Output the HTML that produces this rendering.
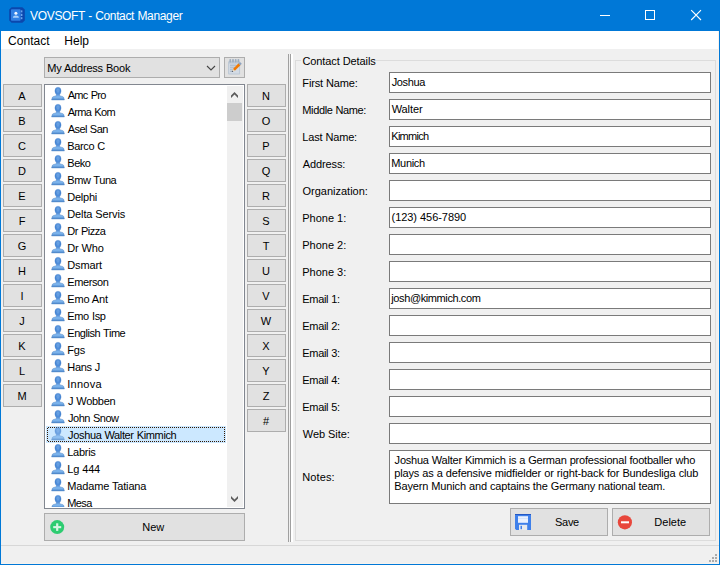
<!DOCTYPE html>
<html><head><meta charset="utf-8"><title>VOVSOFT - Contact Manager</title>
<style>
html,body{margin:0;padding:0}
body{width:720px;height:565px;position:relative;overflow:hidden;background:#f0f0f0;font-family:"Liberation Sans",sans-serif;font-size:11px;color:#000}
div,span,svg{position:absolute;box-sizing:border-box}
.t{white-space:pre;line-height:16px;font-size:11px}
.btn{background:#e1e1e1;border:1px solid #adadad}
.lb{background:#e1e1e1;border:1px solid #adadad;text-align:center;line-height:16px;font-size:11px;padding-top:3px;padding-right:1px}
.inp{background:#fff;border:1px solid #7a7a7a}
</style></head><body>

<div style="left:0px;top:0px;width:720px;height:31px;background:#0078d7"></div>
<div style="left:0px;top:31px;width:720px;height:18px;background:#fff"></div>
<div style="left:0px;top:31px;width:1px;height:534px;background:#0078d7"></div>
<div style="left:719px;top:31px;width:1px;height:534px;background:#0078d7"></div>
<div style="left:0px;top:564px;width:720px;height:1px;background:#0078d7"></div>
<div style="left:718px;top:31px;width:1px;height:533px;background:#f7f3ee"></div>
<div style="left:1px;top:563px;width:718px;height:1px;background:#f7f3ee"></div>
<svg style="left:9px;top:7px" width="16" height="16" viewBox="0 0 16 16">
<path d="M2.6 0.2h10.8l2.4 2.4v10.8l-2.4 2.4H2.6L0.2 13.4V2.6z" fill="#0b47ad"/>
<rect x="2" y="2.2" width="9.6" height="11.6" rx="0.8" fill="#2f80e4"/>
<rect x="11.8" y="3.4" width="1.6" height="2" fill="#6aa6ee"/><rect x="11.8" y="6.8" width="1.6" height="2.2" fill="#6aa6ee"/><rect x="11.8" y="10.2" width="1.6" height="2" fill="#6aa6ee"/>
<circle cx="6.9" cy="6.3" r="1.5" fill="#f4f8ff"/>
<path d="M3.9 10.8c0-1.6 1.3-2.3 3-2.3s3 .7 3 2.3z" fill="#a9d0fb"/>
</svg>
<svg style="left:590px;top:0" width="130" height="31" viewBox="0 0 130 31" shape-rendering="crispEdges">
<rect x="10" y="15" width="10" height="1" fill="#fff"/>
<rect x="55.5" y="10.5" width="9" height="9" fill="none" stroke="#fff" stroke-width="1"/>
<g shape-rendering="geometricPrecision" stroke="#fff" stroke-width="1.1"><path d="M101.2 10.2L111 20M111 10.2L101.2 20" fill="none"/></g>
</svg>
<div class="btn" style="left:44px;top:57px;width:176px;height:21px;"></div>
<svg style="left:206px;top:65px" width="10" height="6" viewBox="0 0 10 6"><path d="M1 1L5 5L9 1" fill="none" stroke="#444" stroke-width="1.1"/></svg>
<div class="btn" style="left:224px;top:57px;width:21px;height:21px;"></div>
<svg style="left:227px;top:59px" width="16" height="16" viewBox="0 0 16 16">
<rect x="1.1" y="2.3" width="12" height="13.2" rx="0.8" fill="#bcc8d5"/>
<rect x="2.1" y="4.6" width="10" height="9.9" fill="#d3dbe5"/>
<g fill="#9dadbf"><rect x="2.4" y="0" width="1.8" height="3.6" rx=".8"/><rect x="5.1" y="0" width="1.8" height="3.6" rx=".8"/><rect x="7.8" y="0" width="1.8" height="3.6" rx=".8"/><rect x="10.5" y="0" width="1.8" height="3.6" rx=".8"/></g>
<g fill="#a4b4c6"><rect x="3" y="5.7" width="6.4" height="1"/><rect x="3" y="7.7" width="5" height="1"/><rect x="3" y="9.7" width="3.4" height="1"/><rect x="3" y="11.7" width="2.4" height="1"/></g>
<path d="M6.9 10.9L12.5 5.3" stroke="#f07a05" stroke-width="2.7" stroke-linecap="butt"/>
<path d="M12.4 5.4L13.9 3.9" stroke="#8ea3bf" stroke-width="2.6"/>
<path d="M5 12.8l.9-2.6 1.8 1.8z" fill="#ecdcbc"/><path d="M4.7 13.1l.7-1.5 .9 .9z" fill="#26344f"/>
</svg>
<div class="lb" style="left:3px;top:84px;width:39px;height:23px;">A</div>
<div class="lb" style="left:3px;top:109px;width:39px;height:23px;">B</div>
<div class="lb" style="left:3px;top:134px;width:39px;height:23px;">C</div>
<div class="lb" style="left:3px;top:159px;width:39px;height:23px;">D</div>
<div class="lb" style="left:3px;top:184px;width:39px;height:23px;">E</div>
<div class="lb" style="left:3px;top:209px;width:39px;height:23px;">F</div>
<div class="lb" style="left:3px;top:234px;width:39px;height:23px;">G</div>
<div class="lb" style="left:3px;top:259px;width:39px;height:23px;">H</div>
<div class="lb" style="left:3px;top:284px;width:39px;height:23px;">I</div>
<div class="lb" style="left:3px;top:309px;width:39px;height:23px;">J</div>
<div class="lb" style="left:3px;top:334px;width:39px;height:23px;">K</div>
<div class="lb" style="left:3px;top:359px;width:39px;height:23px;">L</div>
<div class="lb" style="left:3px;top:384px;width:39px;height:23px;">M</div>
<div class="lb" style="left:247px;top:84px;width:39px;height:23px;">N</div>
<div class="lb" style="left:247px;top:109px;width:39px;height:23px;">O</div>
<div class="lb" style="left:247px;top:134px;width:39px;height:23px;">P</div>
<div class="lb" style="left:247px;top:159px;width:39px;height:23px;">Q</div>
<div class="lb" style="left:247px;top:184px;width:39px;height:23px;">R</div>
<div class="lb" style="left:247px;top:209px;width:39px;height:23px;">S</div>
<div class="lb" style="left:247px;top:234px;width:39px;height:23px;">T</div>
<div class="lb" style="left:247px;top:259px;width:39px;height:23px;">U</div>
<div class="lb" style="left:247px;top:284px;width:39px;height:23px;">V</div>
<div class="lb" style="left:247px;top:309px;width:39px;height:23px;">W</div>
<div class="lb" style="left:247px;top:334px;width:39px;height:23px;">X</div>
<div class="lb" style="left:247px;top:359px;width:39px;height:23px;">Y</div>
<div class="lb" style="left:247px;top:384px;width:39px;height:23px;">Z</div>
<div class="lb" style="left:247px;top:409px;width:39px;height:23px;">#</div>
<div style="left:44px;top:84px;width:201px;height:425px;background:#fff;border:1px solid #828790"></div>
<div style="left:227px;top:86px;width:16px;height:421px;background:#f0f0f0"></div>
<div style="left:227px;top:103px;width:15px;height:18px;background:#cdcdcd"></div>
<svg style="left:230px;top:91px" width="9" height="8" viewBox="0 0 9 8"><path d="M1 4.5L4.5 1L8 4.5V7.1L4.5 3.6L1 7.1Z" fill="#5c5c5c"/></svg>
<svg style="left:230px;top:495px" width="9" height="8" viewBox="0 0 9 8"><path d="M1 3.5L4.5 7L8 3.5V0.9L4.5 4.4L1 0.9Z" fill="#5c5c5c"/></svg>
<div style="left:46px;top:426px;width:180px;height:17px;background:#cce8ff"></div>
<svg style="left:47px;top:427px" width="178" height="15" viewBox="0 0 178 15" shape-rendering="crispEdges"><g fill="#331700"><rect x="1" y="0" width="1" height="1"/><rect x="1" y="14" width="1" height="1"/><rect x="3" y="0" width="1" height="1"/><rect x="3" y="14" width="1" height="1"/><rect x="5" y="0" width="1" height="1"/><rect x="5" y="14" width="1" height="1"/><rect x="7" y="0" width="1" height="1"/><rect x="7" y="14" width="1" height="1"/><rect x="9" y="0" width="1" height="1"/><rect x="9" y="14" width="1" height="1"/><rect x="11" y="0" width="1" height="1"/><rect x="11" y="14" width="1" height="1"/><rect x="13" y="0" width="1" height="1"/><rect x="13" y="14" width="1" height="1"/><rect x="15" y="0" width="1" height="1"/><rect x="15" y="14" width="1" height="1"/><rect x="17" y="0" width="1" height="1"/><rect x="17" y="14" width="1" height="1"/><rect x="19" y="0" width="1" height="1"/><rect x="19" y="14" width="1" height="1"/><rect x="21" y="0" width="1" height="1"/><rect x="21" y="14" width="1" height="1"/><rect x="23" y="0" width="1" height="1"/><rect x="23" y="14" width="1" height="1"/><rect x="25" y="0" width="1" height="1"/><rect x="25" y="14" width="1" height="1"/><rect x="27" y="0" width="1" height="1"/><rect x="27" y="14" width="1" height="1"/><rect x="29" y="0" width="1" height="1"/><rect x="29" y="14" width="1" height="1"/><rect x="31" y="0" width="1" height="1"/><rect x="31" y="14" width="1" height="1"/><rect x="33" y="0" width="1" height="1"/><rect x="33" y="14" width="1" height="1"/><rect x="35" y="0" width="1" height="1"/><rect x="35" y="14" width="1" height="1"/><rect x="37" y="0" width="1" height="1"/><rect x="37" y="14" width="1" height="1"/><rect x="39" y="0" width="1" height="1"/><rect x="39" y="14" width="1" height="1"/><rect x="41" y="0" width="1" height="1"/><rect x="41" y="14" width="1" height="1"/><rect x="43" y="0" width="1" height="1"/><rect x="43" y="14" width="1" height="1"/><rect x="45" y="0" width="1" height="1"/><rect x="45" y="14" width="1" height="1"/><rect x="47" y="0" width="1" height="1"/><rect x="47" y="14" width="1" height="1"/><rect x="49" y="0" width="1" height="1"/><rect x="49" y="14" width="1" height="1"/><rect x="51" y="0" width="1" height="1"/><rect x="51" y="14" width="1" height="1"/><rect x="53" y="0" width="1" height="1"/><rect x="53" y="14" width="1" height="1"/><rect x="55" y="0" width="1" height="1"/><rect x="55" y="14" width="1" height="1"/><rect x="57" y="0" width="1" height="1"/><rect x="57" y="14" width="1" height="1"/><rect x="59" y="0" width="1" height="1"/><rect x="59" y="14" width="1" height="1"/><rect x="61" y="0" width="1" height="1"/><rect x="61" y="14" width="1" height="1"/><rect x="63" y="0" width="1" height="1"/><rect x="63" y="14" width="1" height="1"/><rect x="65" y="0" width="1" height="1"/><rect x="65" y="14" width="1" height="1"/><rect x="67" y="0" width="1" height="1"/><rect x="67" y="14" width="1" height="1"/><rect x="69" y="0" width="1" height="1"/><rect x="69" y="14" width="1" height="1"/><rect x="71" y="0" width="1" height="1"/><rect x="71" y="14" width="1" height="1"/><rect x="73" y="0" width="1" height="1"/><rect x="73" y="14" width="1" height="1"/><rect x="75" y="0" width="1" height="1"/><rect x="75" y="14" width="1" height="1"/><rect x="77" y="0" width="1" height="1"/><rect x="77" y="14" width="1" height="1"/><rect x="79" y="0" width="1" height="1"/><rect x="79" y="14" width="1" height="1"/><rect x="81" y="0" width="1" height="1"/><rect x="81" y="14" width="1" height="1"/><rect x="83" y="0" width="1" height="1"/><rect x="83" y="14" width="1" height="1"/><rect x="85" y="0" width="1" height="1"/><rect x="85" y="14" width="1" height="1"/><rect x="87" y="0" width="1" height="1"/><rect x="87" y="14" width="1" height="1"/><rect x="89" y="0" width="1" height="1"/><rect x="89" y="14" width="1" height="1"/><rect x="91" y="0" width="1" height="1"/><rect x="91" y="14" width="1" height="1"/><rect x="93" y="0" width="1" height="1"/><rect x="93" y="14" width="1" height="1"/><rect x="95" y="0" width="1" height="1"/><rect x="95" y="14" width="1" height="1"/><rect x="97" y="0" width="1" height="1"/><rect x="97" y="14" width="1" height="1"/><rect x="99" y="0" width="1" height="1"/><rect x="99" y="14" width="1" height="1"/><rect x="101" y="0" width="1" height="1"/><rect x="101" y="14" width="1" height="1"/><rect x="103" y="0" width="1" height="1"/><rect x="103" y="14" width="1" height="1"/><rect x="105" y="0" width="1" height="1"/><rect x="105" y="14" width="1" height="1"/><rect x="107" y="0" width="1" height="1"/><rect x="107" y="14" width="1" height="1"/><rect x="109" y="0" width="1" height="1"/><rect x="109" y="14" width="1" height="1"/><rect x="111" y="0" width="1" height="1"/><rect x="111" y="14" width="1" height="1"/><rect x="113" y="0" width="1" height="1"/><rect x="113" y="14" width="1" height="1"/><rect x="115" y="0" width="1" height="1"/><rect x="115" y="14" width="1" height="1"/><rect x="117" y="0" width="1" height="1"/><rect x="117" y="14" width="1" height="1"/><rect x="119" y="0" width="1" height="1"/><rect x="119" y="14" width="1" height="1"/><rect x="121" y="0" width="1" height="1"/><rect x="121" y="14" width="1" height="1"/><rect x="123" y="0" width="1" height="1"/><rect x="123" y="14" width="1" height="1"/><rect x="125" y="0" width="1" height="1"/><rect x="125" y="14" width="1" height="1"/><rect x="127" y="0" width="1" height="1"/><rect x="127" y="14" width="1" height="1"/><rect x="129" y="0" width="1" height="1"/><rect x="129" y="14" width="1" height="1"/><rect x="131" y="0" width="1" height="1"/><rect x="131" y="14" width="1" height="1"/><rect x="133" y="0" width="1" height="1"/><rect x="133" y="14" width="1" height="1"/><rect x="135" y="0" width="1" height="1"/><rect x="135" y="14" width="1" height="1"/><rect x="137" y="0" width="1" height="1"/><rect x="137" y="14" width="1" height="1"/><rect x="139" y="0" width="1" height="1"/><rect x="139" y="14" width="1" height="1"/><rect x="141" y="0" width="1" height="1"/><rect x="141" y="14" width="1" height="1"/><rect x="143" y="0" width="1" height="1"/><rect x="143" y="14" width="1" height="1"/><rect x="145" y="0" width="1" height="1"/><rect x="145" y="14" width="1" height="1"/><rect x="147" y="0" width="1" height="1"/><rect x="147" y="14" width="1" height="1"/><rect x="149" y="0" width="1" height="1"/><rect x="149" y="14" width="1" height="1"/><rect x="151" y="0" width="1" height="1"/><rect x="151" y="14" width="1" height="1"/><rect x="153" y="0" width="1" height="1"/><rect x="153" y="14" width="1" height="1"/><rect x="155" y="0" width="1" height="1"/><rect x="155" y="14" width="1" height="1"/><rect x="157" y="0" width="1" height="1"/><rect x="157" y="14" width="1" height="1"/><rect x="159" y="0" width="1" height="1"/><rect x="159" y="14" width="1" height="1"/><rect x="161" y="0" width="1" height="1"/><rect x="161" y="14" width="1" height="1"/><rect x="163" y="0" width="1" height="1"/><rect x="163" y="14" width="1" height="1"/><rect x="165" y="0" width="1" height="1"/><rect x="165" y="14" width="1" height="1"/><rect x="167" y="0" width="1" height="1"/><rect x="167" y="14" width="1" height="1"/><rect x="169" y="0" width="1" height="1"/><rect x="169" y="14" width="1" height="1"/><rect x="171" y="0" width="1" height="1"/><rect x="171" y="14" width="1" height="1"/><rect x="173" y="0" width="1" height="1"/><rect x="173" y="14" width="1" height="1"/><rect x="175" y="0" width="1" height="1"/><rect x="175" y="14" width="1" height="1"/><rect x="177" y="0" width="1" height="1"/><rect x="177" y="14" width="1" height="1"/><rect x="0" y="1" width="1" height="1"/><rect x="0" y="3" width="1" height="1"/><rect x="0" y="5" width="1" height="1"/><rect x="0" y="7" width="1" height="1"/><rect x="0" y="9" width="1" height="1"/><rect x="0" y="11" width="1" height="1"/><rect x="0" y="13" width="1" height="1"/><rect x="177" y="0" width="1" height="1"/><rect x="177" y="2" width="1" height="1"/><rect x="177" y="4" width="1" height="1"/><rect x="177" y="6" width="1" height="1"/><rect x="177" y="8" width="1" height="1"/><rect x="177" y="10" width="1" height="1"/><rect x="177" y="12" width="1" height="1"/><rect x="177" y="14" width="1" height="1"/></g></svg>
<div style="left:46px;top:86px;width:181px;height:421px;overflow:hidden">
<svg width="0" height="0" style="left:0;top:0"><defs>
<linearGradient id="gh" x1="0" y1="0" x2="0" y2="1"><stop offset="0" stop-color="#629ce0"/><stop offset=".5" stop-color="#4383d2"/><stop offset="1" stop-color="#5694df"/></linearGradient>
<linearGradient id="gs" x1="0" y1="0" x2="0" y2="1"><stop offset="0" stop-color="#5592dc"/><stop offset=".5" stop-color="#82baf1"/><stop offset="1" stop-color="#4f88cb"/></linearGradient>
</defs></svg>
<svg style="left:4px;top:0px" width="16" height="16" viewBox="0 0 16 16"><path d="M5.6 13.9L6.4 11.3C7 10.4 8.6 10.3 10.2 9.9L10.4 8.2H13.6L13.8 9.9C15.4 10.3 17 10.4 17.6 11.3L18.4 13.9Z" transform="translate(-4,0)" fill="url(#gs)" stroke="#4a80c2" stroke-width=".6" stroke-opacity=".8"/><ellipse cx="8" cy="4.9" rx="3.1" ry="3.7" fill="url(#gh)" stroke="#4580c8" stroke-width=".5" stroke-opacity=".6"/><ellipse cx="8" cy="4.6" rx="1.7" ry="2.2" fill="#78aeea" opacity=".6"/></svg>
<svg style="left:4px;top:17px" width="16" height="16" viewBox="0 0 16 16"><path d="M5.6 13.9L6.4 11.3C7 10.4 8.6 10.3 10.2 9.9L10.4 8.2H13.6L13.8 9.9C15.4 10.3 17 10.4 17.6 11.3L18.4 13.9Z" transform="translate(-4,0)" fill="url(#gs)" stroke="#4a80c2" stroke-width=".6" stroke-opacity=".8"/><ellipse cx="8" cy="4.9" rx="3.1" ry="3.7" fill="url(#gh)" stroke="#4580c8" stroke-width=".5" stroke-opacity=".6"/><ellipse cx="8" cy="4.6" rx="1.7" ry="2.2" fill="#78aeea" opacity=".6"/></svg>
<svg style="left:4px;top:34px" width="16" height="16" viewBox="0 0 16 16"><path d="M5.6 13.9L6.4 11.3C7 10.4 8.6 10.3 10.2 9.9L10.4 8.2H13.6L13.8 9.9C15.4 10.3 17 10.4 17.6 11.3L18.4 13.9Z" transform="translate(-4,0)" fill="url(#gs)" stroke="#4a80c2" stroke-width=".6" stroke-opacity=".8"/><ellipse cx="8" cy="4.9" rx="3.1" ry="3.7" fill="url(#gh)" stroke="#4580c8" stroke-width=".5" stroke-opacity=".6"/><ellipse cx="8" cy="4.6" rx="1.7" ry="2.2" fill="#78aeea" opacity=".6"/></svg>
<svg style="left:4px;top:51px" width="16" height="16" viewBox="0 0 16 16"><path d="M5.6 13.9L6.4 11.3C7 10.4 8.6 10.3 10.2 9.9L10.4 8.2H13.6L13.8 9.9C15.4 10.3 17 10.4 17.6 11.3L18.4 13.9Z" transform="translate(-4,0)" fill="url(#gs)" stroke="#4a80c2" stroke-width=".6" stroke-opacity=".8"/><ellipse cx="8" cy="4.9" rx="3.1" ry="3.7" fill="url(#gh)" stroke="#4580c8" stroke-width=".5" stroke-opacity=".6"/><ellipse cx="8" cy="4.6" rx="1.7" ry="2.2" fill="#78aeea" opacity=".6"/></svg>
<svg style="left:4px;top:68px" width="16" height="16" viewBox="0 0 16 16"><path d="M5.6 13.9L6.4 11.3C7 10.4 8.6 10.3 10.2 9.9L10.4 8.2H13.6L13.8 9.9C15.4 10.3 17 10.4 17.6 11.3L18.4 13.9Z" transform="translate(-4,0)" fill="url(#gs)" stroke="#4a80c2" stroke-width=".6" stroke-opacity=".8"/><ellipse cx="8" cy="4.9" rx="3.1" ry="3.7" fill="url(#gh)" stroke="#4580c8" stroke-width=".5" stroke-opacity=".6"/><ellipse cx="8" cy="4.6" rx="1.7" ry="2.2" fill="#78aeea" opacity=".6"/></svg>
<svg style="left:4px;top:85px" width="16" height="16" viewBox="0 0 16 16"><path d="M5.6 13.9L6.4 11.3C7 10.4 8.6 10.3 10.2 9.9L10.4 8.2H13.6L13.8 9.9C15.4 10.3 17 10.4 17.6 11.3L18.4 13.9Z" transform="translate(-4,0)" fill="url(#gs)" stroke="#4a80c2" stroke-width=".6" stroke-opacity=".8"/><ellipse cx="8" cy="4.9" rx="3.1" ry="3.7" fill="url(#gh)" stroke="#4580c8" stroke-width=".5" stroke-opacity=".6"/><ellipse cx="8" cy="4.6" rx="1.7" ry="2.2" fill="#78aeea" opacity=".6"/></svg>
<svg style="left:4px;top:102px" width="16" height="16" viewBox="0 0 16 16"><path d="M5.6 13.9L6.4 11.3C7 10.4 8.6 10.3 10.2 9.9L10.4 8.2H13.6L13.8 9.9C15.4 10.3 17 10.4 17.6 11.3L18.4 13.9Z" transform="translate(-4,0)" fill="url(#gs)" stroke="#4a80c2" stroke-width=".6" stroke-opacity=".8"/><ellipse cx="8" cy="4.9" rx="3.1" ry="3.7" fill="url(#gh)" stroke="#4580c8" stroke-width=".5" stroke-opacity=".6"/><ellipse cx="8" cy="4.6" rx="1.7" ry="2.2" fill="#78aeea" opacity=".6"/></svg>
<svg style="left:4px;top:119px" width="16" height="16" viewBox="0 0 16 16"><path d="M5.6 13.9L6.4 11.3C7 10.4 8.6 10.3 10.2 9.9L10.4 8.2H13.6L13.8 9.9C15.4 10.3 17 10.4 17.6 11.3L18.4 13.9Z" transform="translate(-4,0)" fill="url(#gs)" stroke="#4a80c2" stroke-width=".6" stroke-opacity=".8"/><ellipse cx="8" cy="4.9" rx="3.1" ry="3.7" fill="url(#gh)" stroke="#4580c8" stroke-width=".5" stroke-opacity=".6"/><ellipse cx="8" cy="4.6" rx="1.7" ry="2.2" fill="#78aeea" opacity=".6"/></svg>
<svg style="left:4px;top:136px" width="16" height="16" viewBox="0 0 16 16"><path d="M5.6 13.9L6.4 11.3C7 10.4 8.6 10.3 10.2 9.9L10.4 8.2H13.6L13.8 9.9C15.4 10.3 17 10.4 17.6 11.3L18.4 13.9Z" transform="translate(-4,0)" fill="url(#gs)" stroke="#4a80c2" stroke-width=".6" stroke-opacity=".8"/><ellipse cx="8" cy="4.9" rx="3.1" ry="3.7" fill="url(#gh)" stroke="#4580c8" stroke-width=".5" stroke-opacity=".6"/><ellipse cx="8" cy="4.6" rx="1.7" ry="2.2" fill="#78aeea" opacity=".6"/></svg>
<svg style="left:4px;top:153px" width="16" height="16" viewBox="0 0 16 16"><path d="M5.6 13.9L6.4 11.3C7 10.4 8.6 10.3 10.2 9.9L10.4 8.2H13.6L13.8 9.9C15.4 10.3 17 10.4 17.6 11.3L18.4 13.9Z" transform="translate(-4,0)" fill="url(#gs)" stroke="#4a80c2" stroke-width=".6" stroke-opacity=".8"/><ellipse cx="8" cy="4.9" rx="3.1" ry="3.7" fill="url(#gh)" stroke="#4580c8" stroke-width=".5" stroke-opacity=".6"/><ellipse cx="8" cy="4.6" rx="1.7" ry="2.2" fill="#78aeea" opacity=".6"/></svg>
<svg style="left:4px;top:170px" width="16" height="16" viewBox="0 0 16 16"><path d="M5.6 13.9L6.4 11.3C7 10.4 8.6 10.3 10.2 9.9L10.4 8.2H13.6L13.8 9.9C15.4 10.3 17 10.4 17.6 11.3L18.4 13.9Z" transform="translate(-4,0)" fill="url(#gs)" stroke="#4a80c2" stroke-width=".6" stroke-opacity=".8"/><ellipse cx="8" cy="4.9" rx="3.1" ry="3.7" fill="url(#gh)" stroke="#4580c8" stroke-width=".5" stroke-opacity=".6"/><ellipse cx="8" cy="4.6" rx="1.7" ry="2.2" fill="#78aeea" opacity=".6"/></svg>
<svg style="left:4px;top:187px" width="16" height="16" viewBox="0 0 16 16"><path d="M5.6 13.9L6.4 11.3C7 10.4 8.6 10.3 10.2 9.9L10.4 8.2H13.6L13.8 9.9C15.4 10.3 17 10.4 17.6 11.3L18.4 13.9Z" transform="translate(-4,0)" fill="url(#gs)" stroke="#4a80c2" stroke-width=".6" stroke-opacity=".8"/><ellipse cx="8" cy="4.9" rx="3.1" ry="3.7" fill="url(#gh)" stroke="#4580c8" stroke-width=".5" stroke-opacity=".6"/><ellipse cx="8" cy="4.6" rx="1.7" ry="2.2" fill="#78aeea" opacity=".6"/></svg>
<svg style="left:4px;top:204px" width="16" height="16" viewBox="0 0 16 16"><path d="M5.6 13.9L6.4 11.3C7 10.4 8.6 10.3 10.2 9.9L10.4 8.2H13.6L13.8 9.9C15.4 10.3 17 10.4 17.6 11.3L18.4 13.9Z" transform="translate(-4,0)" fill="url(#gs)" stroke="#4a80c2" stroke-width=".6" stroke-opacity=".8"/><ellipse cx="8" cy="4.9" rx="3.1" ry="3.7" fill="url(#gh)" stroke="#4580c8" stroke-width=".5" stroke-opacity=".6"/><ellipse cx="8" cy="4.6" rx="1.7" ry="2.2" fill="#78aeea" opacity=".6"/></svg>
<svg style="left:4px;top:221px" width="16" height="16" viewBox="0 0 16 16"><path d="M5.6 13.9L6.4 11.3C7 10.4 8.6 10.3 10.2 9.9L10.4 8.2H13.6L13.8 9.9C15.4 10.3 17 10.4 17.6 11.3L18.4 13.9Z" transform="translate(-4,0)" fill="url(#gs)" stroke="#4a80c2" stroke-width=".6" stroke-opacity=".8"/><ellipse cx="8" cy="4.9" rx="3.1" ry="3.7" fill="url(#gh)" stroke="#4580c8" stroke-width=".5" stroke-opacity=".6"/><ellipse cx="8" cy="4.6" rx="1.7" ry="2.2" fill="#78aeea" opacity=".6"/></svg>
<svg style="left:4px;top:238px" width="16" height="16" viewBox="0 0 16 16"><path d="M5.6 13.9L6.4 11.3C7 10.4 8.6 10.3 10.2 9.9L10.4 8.2H13.6L13.8 9.9C15.4 10.3 17 10.4 17.6 11.3L18.4 13.9Z" transform="translate(-4,0)" fill="url(#gs)" stroke="#4a80c2" stroke-width=".6" stroke-opacity=".8"/><ellipse cx="8" cy="4.9" rx="3.1" ry="3.7" fill="url(#gh)" stroke="#4580c8" stroke-width=".5" stroke-opacity=".6"/><ellipse cx="8" cy="4.6" rx="1.7" ry="2.2" fill="#78aeea" opacity=".6"/></svg>
<svg style="left:4px;top:255px" width="16" height="16" viewBox="0 0 16 16"><path d="M5.6 13.9L6.4 11.3C7 10.4 8.6 10.3 10.2 9.9L10.4 8.2H13.6L13.8 9.9C15.4 10.3 17 10.4 17.6 11.3L18.4 13.9Z" transform="translate(-4,0)" fill="url(#gs)" stroke="#4a80c2" stroke-width=".6" stroke-opacity=".8"/><ellipse cx="8" cy="4.9" rx="3.1" ry="3.7" fill="url(#gh)" stroke="#4580c8" stroke-width=".5" stroke-opacity=".6"/><ellipse cx="8" cy="4.6" rx="1.7" ry="2.2" fill="#78aeea" opacity=".6"/></svg>
<svg style="left:4px;top:272px" width="16" height="16" viewBox="0 0 16 16"><path d="M5.6 13.9L6.4 11.3C7 10.4 8.6 10.3 10.2 9.9L10.4 8.2H13.6L13.8 9.9C15.4 10.3 17 10.4 17.6 11.3L18.4 13.9Z" transform="translate(-4,0)" fill="url(#gs)" stroke="#4a80c2" stroke-width=".6" stroke-opacity=".8"/><ellipse cx="8" cy="4.9" rx="3.1" ry="3.7" fill="url(#gh)" stroke="#4580c8" stroke-width=".5" stroke-opacity=".6"/><ellipse cx="8" cy="4.6" rx="1.7" ry="2.2" fill="#78aeea" opacity=".6"/></svg>
<svg style="left:4px;top:289px" width="16" height="16" viewBox="0 0 16 16"><path d="M5.6 13.9L6.4 11.3C7 10.4 8.6 10.3 10.2 9.9L10.4 8.2H13.6L13.8 9.9C15.4 10.3 17 10.4 17.6 11.3L18.4 13.9Z" transform="translate(-4,0)" fill="url(#gs)" stroke="#4a80c2" stroke-width=".6" stroke-opacity=".8"/><ellipse cx="8" cy="4.9" rx="3.1" ry="3.7" fill="url(#gh)" stroke="#4580c8" stroke-width=".5" stroke-opacity=".6"/><ellipse cx="8" cy="4.6" rx="1.7" ry="2.2" fill="#78aeea" opacity=".6"/></svg>
<svg style="left:4px;top:306px" width="16" height="16" viewBox="0 0 16 16"><path d="M5.6 13.9L6.4 11.3C7 10.4 8.6 10.3 10.2 9.9L10.4 8.2H13.6L13.8 9.9C15.4 10.3 17 10.4 17.6 11.3L18.4 13.9Z" transform="translate(-4,0)" fill="url(#gs)" stroke="#4a80c2" stroke-width=".6" stroke-opacity=".8"/><ellipse cx="8" cy="4.9" rx="3.1" ry="3.7" fill="url(#gh)" stroke="#4580c8" stroke-width=".5" stroke-opacity=".6"/><ellipse cx="8" cy="4.6" rx="1.7" ry="2.2" fill="#78aeea" opacity=".6"/></svg>
<svg style="left:4px;top:323px" width="16" height="16" viewBox="0 0 16 16"><path d="M5.6 13.9L6.4 11.3C7 10.4 8.6 10.3 10.2 9.9L10.4 8.2H13.6L13.8 9.9C15.4 10.3 17 10.4 17.6 11.3L18.4 13.9Z" transform="translate(-4,0)" fill="url(#gs)" stroke="#4a80c2" stroke-width=".6" stroke-opacity=".8"/><ellipse cx="8" cy="4.9" rx="3.1" ry="3.7" fill="url(#gh)" stroke="#4580c8" stroke-width=".5" stroke-opacity=".6"/><ellipse cx="8" cy="4.6" rx="1.7" ry="2.2" fill="#78aeea" opacity=".6"/></svg>
<svg style="left:4px;top:340px;opacity:.75" width="16" height="16" viewBox="0 0 16 16"><path d="M5.6 13.9L6.4 11.3C7 10.4 8.6 10.3 10.2 9.9L10.4 8.2H13.6L13.8 9.9C15.4 10.3 17 10.4 17.6 11.3L18.4 13.9Z" transform="translate(-4,0)" fill="url(#gs)" stroke="#4a80c2" stroke-width=".6" stroke-opacity=".8"/><ellipse cx="8" cy="4.9" rx="3.1" ry="3.7" fill="url(#gh)" stroke="#4580c8" stroke-width=".5" stroke-opacity=".6"/><ellipse cx="8" cy="4.6" rx="1.7" ry="2.2" fill="#78aeea" opacity=".6"/></svg>
<svg style="left:4px;top:357px" width="16" height="16" viewBox="0 0 16 16"><path d="M5.6 13.9L6.4 11.3C7 10.4 8.6 10.3 10.2 9.9L10.4 8.2H13.6L13.8 9.9C15.4 10.3 17 10.4 17.6 11.3L18.4 13.9Z" transform="translate(-4,0)" fill="url(#gs)" stroke="#4a80c2" stroke-width=".6" stroke-opacity=".8"/><ellipse cx="8" cy="4.9" rx="3.1" ry="3.7" fill="url(#gh)" stroke="#4580c8" stroke-width=".5" stroke-opacity=".6"/><ellipse cx="8" cy="4.6" rx="1.7" ry="2.2" fill="#78aeea" opacity=".6"/></svg>
<svg style="left:4px;top:374px" width="16" height="16" viewBox="0 0 16 16"><path d="M5.6 13.9L6.4 11.3C7 10.4 8.6 10.3 10.2 9.9L10.4 8.2H13.6L13.8 9.9C15.4 10.3 17 10.4 17.6 11.3L18.4 13.9Z" transform="translate(-4,0)" fill="url(#gs)" stroke="#4a80c2" stroke-width=".6" stroke-opacity=".8"/><ellipse cx="8" cy="4.9" rx="3.1" ry="3.7" fill="url(#gh)" stroke="#4580c8" stroke-width=".5" stroke-opacity=".6"/><ellipse cx="8" cy="4.6" rx="1.7" ry="2.2" fill="#78aeea" opacity=".6"/></svg>
<svg style="left:4px;top:391px" width="16" height="16" viewBox="0 0 16 16"><path d="M5.6 13.9L6.4 11.3C7 10.4 8.6 10.3 10.2 9.9L10.4 8.2H13.6L13.8 9.9C15.4 10.3 17 10.4 17.6 11.3L18.4 13.9Z" transform="translate(-4,0)" fill="url(#gs)" stroke="#4a80c2" stroke-width=".6" stroke-opacity=".8"/><ellipse cx="8" cy="4.9" rx="3.1" ry="3.7" fill="url(#gh)" stroke="#4580c8" stroke-width=".5" stroke-opacity=".6"/><ellipse cx="8" cy="4.6" rx="1.7" ry="2.2" fill="#78aeea" opacity=".6"/></svg>
<svg style="left:4px;top:408px" width="16" height="16" viewBox="0 0 16 16"><path d="M5.6 13.9L6.4 11.3C7 10.4 8.6 10.3 10.2 9.9L10.4 8.2H13.6L13.8 9.9C15.4 10.3 17 10.4 17.6 11.3L18.4 13.9Z" transform="translate(-4,0)" fill="url(#gs)" stroke="#4a80c2" stroke-width=".6" stroke-opacity=".8"/><ellipse cx="8" cy="4.9" rx="3.1" ry="3.7" fill="url(#gh)" stroke="#4580c8" stroke-width=".5" stroke-opacity=".6"/><ellipse cx="8" cy="4.6" rx="1.7" ry="2.2" fill="#78aeea" opacity=".6"/></svg>
</div>
<div class="btn" style="left:44px;top:513px;width:201px;height:28px;"></div>
<svg style="left:49px;top:519px" width="16" height="16" viewBox="0 0 16 16"><circle cx="8.2" cy="8.1" r="7" fill="#2ecc71"/><rect x="4.2" y="7.1" width="8" height="2.1" fill="#d8f6e4"/><rect x="7.1" y="4.3" width="2.2" height="7.6" fill="#d8f6e4"/></svg>
<div style="left:288px;top:54px;width:1px;height:488px;background:#a0a0a0"></div>
<div style="left:290px;top:54px;width:1px;height:488px;background:#a0a0a0"></div>
<div style="left:291px;top:54px;width:2px;height:488px;background:#fff"></div>
<div style="left:295px;top:60px;width:421px;height:481px;border:1px solid #dcdcdc"></div>
<div style="left:301px;top:58px;width:75px;height:6px;background:#f0f0f0"></div>
<div class="inp" style="left:389px;top:72px;width:322px;height:21px;"></div>
<div class="inp" style="left:389px;top:99px;width:322px;height:21px;"></div>
<div class="inp" style="left:389px;top:126px;width:322px;height:21px;"></div>
<div class="inp" style="left:389px;top:153px;width:322px;height:21px;"></div>
<div class="inp" style="left:389px;top:180px;width:322px;height:21px;"></div>
<div class="inp" style="left:389px;top:207px;width:322px;height:21px;"></div>
<div class="inp" style="left:389px;top:234px;width:322px;height:21px;"></div>
<div class="inp" style="left:389px;top:261px;width:322px;height:21px;"></div>
<div class="inp" style="left:389px;top:288px;width:322px;height:21px;"></div>
<div class="inp" style="left:389px;top:315px;width:322px;height:21px;"></div>
<div class="inp" style="left:389px;top:342px;width:322px;height:21px;"></div>
<div class="inp" style="left:389px;top:369px;width:322px;height:21px;"></div>
<div class="inp" style="left:389px;top:396px;width:322px;height:21px;"></div>
<div class="inp" style="left:389px;top:423px;width:322px;height:21px;"></div>
<div class="inp" style="left:389px;top:450px;width:322px;height:54px;"></div>
<div class="btn" style="left:510px;top:508px;width:98px;height:28px;"></div>
<div class="btn" style="left:612px;top:508px;width:98px;height:28px;"></div>
<svg style="left:515px;top:514px" width="16" height="16" viewBox="0 0 16 16">
<path d="M0 0H16V16H1.2L0 14.8Z" fill="#3f80ea"/><rect x="0" y="0" width="16" height="1" fill="#2458c4"/>
<rect x="3" y="2.2" width="10" height="6.6" fill="#e9f1ff"/><rect x="3" y="4" width="10" height="0.8" fill="#cfe0fb"/>
<rect x="4" y="10.8" width="8.2" height="5.2" fill="#e6e9ee"/><rect x="5.5" y="11.8" width="1.5" height="3.4" fill="#3f80ea"/>
</svg>
<svg style="left:617px;top:514px" width="16" height="17" viewBox="0 0 16 17"><circle cx="7.9" cy="8.3" r="7.1" fill="#e8473c"/><rect x="4" y="7.3" width="8" height="2" fill="#fff"/></svg>
<div style="left:1px;top:545px;width:718px;height:1px;background:#d7d7d7"></div>
<svg style="left:708px;top:553px" width="10" height="10" viewBox="0 0 10 10" shape-rendering="crispEdges"><g fill="#ababab"><rect x="7" y="1" width="2" height="2"/><rect x="4" y="4" width="2" height="2"/><rect x="7" y="4" width="2" height="2"/><rect x="1" y="7" width="2" height="2"/><rect x="4" y="7" width="2" height="2"/><rect x="7" y="7" width="2" height="2"/></g></svg>
<span class="t" style="left:30.08px;top:8px;font-size:12px;letter-spacing:-0.341px;word-spacing:0.341px;color:#fff">VOVSOFT - Contact Manager</span>
<span class="t" style="left:7.94px;top:33px;font-size:12px;letter-spacing:0.066px;color:#000">Contact</span>
<span class="t" style="left:64.30px;top:33px;font-size:12px;letter-spacing:0.014px;color:#000">Help</span>
<span class="t" style="left:47.30px;top:60px;font-size:11px;letter-spacing:-0.209px;word-spacing:0.209px;color:#000">My Address Book</span>
<span class="t" style="left:67.68px;top:87px;font-size:11px;letter-spacing:-0.695px;word-spacing:0.695px;color:#000">Amc Pro</span>
<span class="t" style="left:67.68px;top:104px;font-size:11px;letter-spacing:-0.664px;word-spacing:0.664px;color:#000">Arma Kom</span>
<span class="t" style="left:67.68px;top:121px;font-size:11px;letter-spacing:-0.563px;word-spacing:0.563px;color:#000">Asel San</span>
<span class="t" style="left:67.30px;top:138px;font-size:11px;letter-spacing:-0.360px;word-spacing:0.360px;color:#000">Barco C</span>
<span class="t" style="left:67.30px;top:155px;font-size:11px;letter-spacing:-0.467px;color:#000">Beko</span>
<span class="t" style="left:67.30px;top:172px;font-size:11px;letter-spacing:-0.424px;word-spacing:0.424px;color:#000">Bmw Tuna</span>
<span class="t" style="left:67.30px;top:189px;font-size:11px;letter-spacing:-0.256px;color:#000">Delphi</span>
<span class="t" style="left:67.30px;top:206px;font-size:11px;letter-spacing:-0.141px;word-spacing:0.141px;color:#000">Delta Servis</span>
<span class="t" style="left:67.30px;top:223px;font-size:11px;letter-spacing:-0.501px;word-spacing:0.501px;color:#000">Dr Pizza</span>
<span class="t" style="left:67.30px;top:240px;font-size:11px;letter-spacing:-0.187px;word-spacing:0.187px;color:#000">Dr Who</span>
<span class="t" style="left:67.30px;top:257px;font-size:11px;letter-spacing:-0.131px;color:#000">Dsmart</span>
<span class="t" style="left:67.30px;top:274px;font-size:11px;letter-spacing:-0.417px;color:#000">Emerson</span>
<span class="t" style="left:67.30px;top:291px;font-size:11px;letter-spacing:-0.171px;word-spacing:0.171px;color:#000">Emo Ant</span>
<span class="t" style="left:67.30px;top:308px;font-size:11px;letter-spacing:-0.350px;word-spacing:0.350px;color:#000">Emo Isp</span>
<span class="t" style="left:67.30px;top:325px;font-size:11px;letter-spacing:-0.455px;word-spacing:0.455px;color:#000">English Time</span>
<span class="t" style="left:67.30px;top:342px;font-size:11px;letter-spacing:-0.206px;color:#000">Fgs</span>
<span class="t" style="left:67.30px;top:359px;font-size:11px;letter-spacing:-0.339px;word-spacing:0.339px;color:#000">Hans J</span>
<span class="t" style="left:67.28px;top:376px;font-size:11px;letter-spacing:0.264px;color:#000">Innova</span>
<span class="t" style="left:68.10px;top:393px;font-size:11px;letter-spacing:-0.309px;word-spacing:0.309px;color:#000">J Wobben</span>
<span class="t" style="left:68.10px;top:410px;font-size:11px;letter-spacing:-0.506px;word-spacing:0.506px;color:#000">John Snow</span>
<span class="t" style="left:68.10px;top:427px;font-size:11px;letter-spacing:-0.361px;word-spacing:0.361px;color:#000">Joshua Walter Kimmich</span>
<span class="t" style="left:67.30px;top:444px;font-size:11px;letter-spacing:-0.292px;color:#000">Labris</span>
<span class="t" style="left:67.30px;top:461px;font-size:11px;letter-spacing:-0.177px;word-spacing:0.177px;color:#000">Lg 444</span>
<span class="t" style="left:67.30px;top:478px;font-size:11px;letter-spacing:-0.167px;word-spacing:0.167px;color:#000">Madame Tatiana</span>
<span class="t" style="left:67.30px;top:495px;font-size:11px;letter-spacing:-0.615px;color:#000">Mesa</span>
<span class="t" style="left:302.30px;top:75px;font-size:11px;letter-spacing:-0.140px;word-spacing:0.140px;color:#000">First Name:</span>
<span class="t" style="left:302.30px;top:102px;font-size:11px;letter-spacing:-0.376px;word-spacing:0.376px;color:#000">Middle Name:</span>
<span class="t" style="left:302.30px;top:129px;font-size:11px;letter-spacing:-0.176px;word-spacing:0.176px;color:#000">Last Name:</span>
<span class="t" style="left:302.78px;top:156px;font-size:11px;letter-spacing:-0.112px;color:#000">Address:</span>
<span class="t" style="left:302.45px;top:183px;font-size:11px;letter-spacing:0.004px;color:#000">Organization:</span>
<span class="t" style="left:302.30px;top:210px;font-size:11px;letter-spacing:-0.025px;word-spacing:0.025px;color:#000">Phone 1:</span>
<span class="t" style="left:302.30px;top:237px;font-size:11px;letter-spacing:-0.025px;word-spacing:0.025px;color:#000">Phone 2:</span>
<span class="t" style="left:302.30px;top:264px;font-size:11px;letter-spacing:-0.025px;word-spacing:0.025px;color:#000">Phone 3:</span>
<span class="t" style="left:302.30px;top:291px;font-size:11px;letter-spacing:-0.327px;word-spacing:0.327px;color:#000">Email 1:</span>
<span class="t" style="left:302.30px;top:318px;font-size:11px;letter-spacing:-0.327px;word-spacing:0.327px;color:#000">Email 2:</span>
<span class="t" style="left:302.30px;top:345px;font-size:11px;letter-spacing:-0.327px;word-spacing:0.327px;color:#000">Email 3:</span>
<span class="t" style="left:302.30px;top:372px;font-size:11px;letter-spacing:-0.327px;word-spacing:0.327px;color:#000">Email 4:</span>
<span class="t" style="left:302.30px;top:399px;font-size:11px;letter-spacing:-0.327px;word-spacing:0.327px;color:#000">Email 5:</span>
<span class="t" style="left:302.78px;top:426px;font-size:11px;letter-spacing:-0.065px;word-spacing:0.065px;color:#000">Web Site:</span>
<span class="t" style="left:302.30px;top:469px;font-size:11px;letter-spacing:0.107px;color:#000">Notes:</span>
<span class="t" style="left:302.38px;top:53px;font-size:11px;letter-spacing:-0.094px;word-spacing:0.094px;color:#000">Contact Details</span>
<span class="t" style="left:391.70px;top:74px;font-size:11px;letter-spacing:-0.367px;color:#000">Joshua</span>
<span class="t" style="left:391.78px;top:101px;font-size:11px;letter-spacing:-0.120px;color:#000">Walter</span>
<span class="t" style="left:391.30px;top:128px;font-size:11px;letter-spacing:-0.734px;color:#000">Kimmich</span>
<span class="t" style="left:391.30px;top:155px;font-size:11px;letter-spacing:-0.351px;color:#000">Munich</span>
<span class="t" style="left:391.30px;top:290px;font-size:11px;letter-spacing:-0.397px;color:#000">josh@kimmich.com</span>
<span class="t" style="left:394.60px;top:452px;font-size:11px;letter-spacing:-0.217px;word-spacing:0.217px;color:#000">Joshua Walter Kimmich is a German professional footballer who</span>
<span class="t" style="left:394.15px;top:465px;font-size:11px;letter-spacing:-0.126px;word-spacing:0.126px;color:#000">plays as a defensive midfielder or right-back for Bundesliga club</span>
<span class="t" style="left:394.30px;top:478px;font-size:11px;letter-spacing:-0.144px;word-spacing:0.144px;color:#000">Bayern Munich and captains the Germany national team.</span>
<span class="t" style="left:391.55px;top:209px;font-size:11px;letter-spacing:-0.049px;word-spacing:0.049px;color:#000">(123) 456-7890</span>
<span class="t" style="left:142.30px;top:519px;font-size:11px;letter-spacing:-0.099px;color:#000">New</span>
<span class="t" style="left:554.94px;top:514px;font-size:11px;letter-spacing:-0.256px;color:#000">Save</span>
<span class="t" style="left:654.30px;top:514px;font-size:11px;letter-spacing:0.010px;color:#000">Delete</span>
</body></html>
